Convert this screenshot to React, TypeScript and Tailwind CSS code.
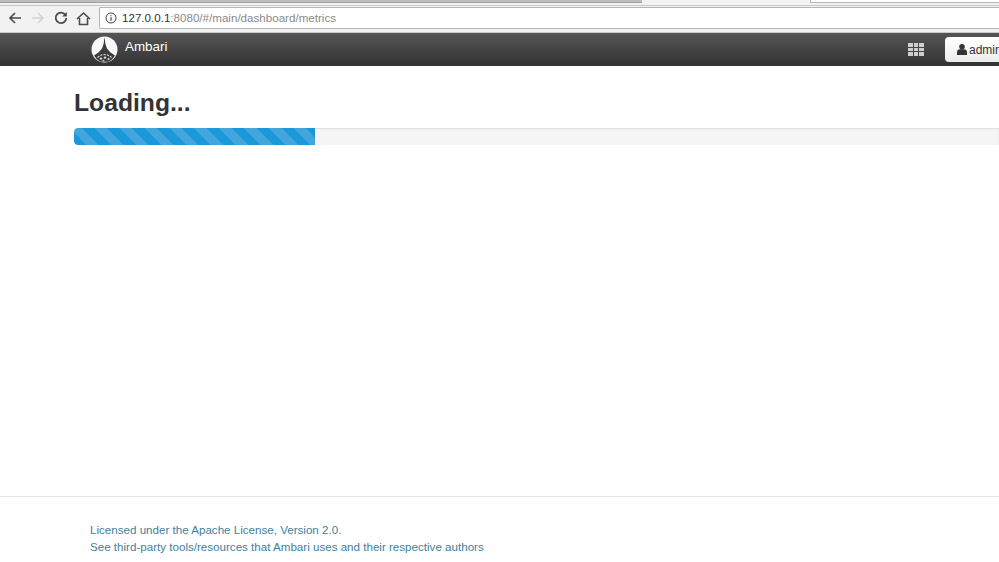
const SANS = "font-['Liberation_Sans',Arial,sans-serif]";

function Logo() {
  return (
    <svg width="27" height="27" viewBox="0 0 27 27" className="block">
      <circle cx="13.5" cy="13.5" r="13" fill="#f7f7f7" />
      <path d="M13.5 1 L14.4 8 L16 12.5 L19.5 16.5 L24 19.5 L21 23.5 L17.5 25.8 H9.5 L6 23.5 L3 19.5 L7.5 16.5 L11 12.5 L12.6 8 Z" fill="#3c3c3c" />
      <path d="M6.5 21.5 Q13.5 15.5 20.5 21.5" fill="none" stroke="#d4d4d4" strokeWidth="1.2" strokeDasharray="2.2 1.2" />
      <circle cx="10" cy="22.6" r="1.2" fill="#dcdcdc" />
      <circle cx="14" cy="21.6" r="1.2" fill="#dcdcdc" />
      <circle cx="17.5" cy="23" r="1.1" fill="#dcdcdc" />
      <circle cx="12.5" cy="24.6" r="0.9" fill="#c4c4c4" />
    </svg>
  );
}

function Chrome() {
  return (
    <div className="h-[33px] bg-[#f2f2f2] flex flex-col shrink-0">
      <div className="h-[7px] flex flex-col shrink-0 relative">
        <div className="h-[5px] flex">
          <div className="w-[642px] h-[3px] bg-[#bdbdbd] border-b border-[#a0a0a0]" />
          <div className="w-[168px] h-[5px] bg-[#f2f2f2]" />
          <div className="flex-1 h-[3px] bg-white border-b border-l border-[#b8b8b8]" />
        </div>
        <div className="h-[1px] bg-[#c8c8c8]" />
      </div>
      <div className="flex items-center h-[22px] shrink-0">
        <svg width="14" height="14" viewBox="0 0 14 14" className="ml-[8px] shrink-0" fill="none" stroke="#4a4a4a" strokeWidth="1.6">
          <path d="M13 7H2M7 2 2 7l5 5" />
        </svg>
        <svg width="14" height="14" viewBox="0 0 14 14" className="ml-[9px] shrink-0" fill="none" stroke="#d2d2d2" strokeWidth="1.6">
          <path d="M1 7h11M7 2l5 5-5 5" />
        </svg>
        <svg width="14" height="14" viewBox="0 0 14 14" className="ml-[9px] shrink-0" fill="none" stroke="#4a4a4a" strokeWidth="1.8">
          <path d="M11.6 4.2A5.3 5.3 0 1 0 12.3 7" />
          <path d="M12.8 1v4.6H8.2" fill="#4a4a4a" stroke="none" />
        </svg>
        <svg width="15" height="15" viewBox="0 0 15 15" className="ml-[8px] shrink-0" fill="none" stroke="#4a4a4a" strokeWidth="1.6">
          <path d="M1 8l6.5-6L14 8M3.5 7v6.5h8V7" />
        </svg>
        <div className="ml-[8px] flex-1 h-[22px] bg-white border border-[#b5b5b5] border-r-0 rounded-l-[2px] flex items-center pl-[5px]">
          <svg width="12" height="12" viewBox="0 0 12 12" className="shrink-0" fill="none" stroke="#444" strokeWidth="1">
            <circle cx="6" cy="6" r="5" />
            <path d="M6 5.3v3.4M6 3.2v1.1" strokeWidth="1.2" />
          </svg>
          <span className={`${SANS} ml-[5px] -mt-px text-[11.6px] text-[#333] whitespace-nowrap`}>
            127.0.0.1<span className="text-[#8a8a8a]">:8080/#/main/dashboard/metrics</span>
          </span>
        </div>
      </div>
      <div className="flex-1 border-b border-[#c9c9c9]" />
    </div>
  );
}

function Navbar() {
  return (
    <div className="h-[33px] shrink-0 bg-gradient-to-b from-[#555555] to-[#333333] flex items-center overflow-hidden">
      <div className="ml-[91px]">
        <Logo />
      </div>
      <span className={`${SANS} ml-[7px] -mt-[5px] text-[13.4px] text-white`}>Ambari</span>
      <div className="ml-auto grid grid-cols-3 gap-[1px] w-[16px] mr-[21px]">
        {Array.from({ length: 9 }).map((_, i) => (
          <div key={i} className="h-[3.5px] bg-[#cfcfcf]" />
        ))}
      </div>
      <div className="w-[54px] h-[25px] bg-gradient-to-b from-white to-[#ececec] rounded-l-[4px] flex items-center pl-[12px] shrink-0">
        <svg width="10" height="11" viewBox="0 0 10 11" className="shrink-0" fill="#333">
          <circle cx="5" cy="2.8" r="2.8" />
          <path d="M0 11V8.2C0 6.3 1.2 5.2 3 5.2h4c1.8 0 3 1.1 3 3V11z" />
        </svg>
        <span className={`${SANS} ml-[2px] text-[12px] text-[#333] whitespace-nowrap`}>admin</span>
      </div>
    </div>
  );
}

export default function App() {
  return (
    <div className={`${SANS} w-[999px] h-[562px] bg-white flex flex-col overflow-hidden`}>
      <Chrome />
      <Navbar />
      <main className="flex-1 pl-[74px] pt-[22px]">
        <h1 className="text-[24.7px] leading-[30px] font-bold text-[#333]">Loading...</h1>
        <div className="mt-[10px] h-[17px] bg-[#f5f5f5] rounded-l-[4px] overflow-hidden shadow-[inset_0_1px_2px_rgba(0,0,0,0.1)]">
          <div className="w-[241px] h-full rounded-l-[4px] bg-[repeating-linear-gradient(45deg,#1b98da_0,#1b98da_8.8px,#42a6dc_8.8px,#42a6dc_17.6px)]" />
        </div>
      </main>
      <footer className="h-[66px] shrink-0 border-t border-[#e5e5e5] pl-[90px] pt-[24px] text-[11.6px] leading-[17px] text-[#3f7f9c]">
        <div>Licensed under the Apache License, Version 2.0.</div>
        <div>See third-party tools/resources that Ambari uses and their respective authors</div>
      </footer>
    </div>
  );
}
